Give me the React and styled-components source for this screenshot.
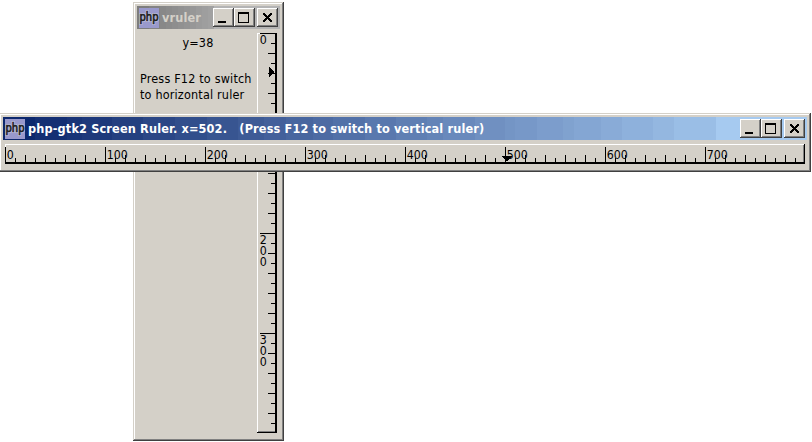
import React from "react";
import styled, { createGlobalStyle } from "styled-components";

const FONT = '"DejaVu Sans Condensed", "DejaVu Sans", sans-serif';

const GlobalStyle = createGlobalStyle`
  body { margin: 0; background: #fff; overflow: hidden; }
`;

const Desktop = styled.main`
  position: relative;
  width: 812px;
  height: 442px;
  overflow: hidden;
  background: #fff;
  font-family: ${FONT};
  font-stretch: condensed;
  color: #000;
`;

const Window = styled.section`
  position: absolute;
  left: ${(p) => p.$x}px;
  top: ${(p) => p.$y}px;
  width: ${(p) => p.$w}px;
  height: ${(p) => p.$h}px;
  box-sizing: border-box;
  padding: 4px;
  display: flex;
  flex-direction: column;
  background: #d4d0c8;
  box-shadow: inset -1px -1px #404040, inset 1px 1px #d4d0c8,
    inset -2px -2px #808080, inset 2px 2px #fff;
`;

const TitleBar = styled.header`
  flex: none;
  height: 23px;
  box-sizing: border-box;
  padding: 0 2px;
  display: flex;
  align-items: center;
  background: ${(p) => p.$fill};
`;

const Title = styled.h1`
  flex: 1;
  margin: 0 0 0 3px;
  font-size: 12.6px;
  line-height: 22px;
  font-weight: bold;
  letter-spacing: 0.145px;
  white-space: pre;
  color: ${(p) => p.$color};
`;

const CaptionButton = styled.button`
  width: 21px;
  height: 19px;
  padding: 0;
  border: 0;
  display: block;
  background: #d4d0c8;
  box-shadow: inset -1px -1px #404040, inset 1px 1px #fff, inset -2px -2px #808080;
  margin-left: ${(p) => (p.$gap ? 2 : 0)}px;
  svg { display: block; }
`;

const Logo = styled.svg`
  flex: none;
  width: 20px;
  height: 20px;
  display: block;
`;

const LogoText = styled.text`
  font-family: ${FONT};
  font-size: 12.6px;
`;

const VerticalBody = styled.div`
  flex: 1;
  display: flex;
  justify-content: space-between;
  padding: 4px 3px 0 3px;
`;

const Notes = styled.div`
  width: 116px;
  font-size: 12.5px;
  line-height: 16px;
  letter-spacing: 0.18px;
`;

const Reading = styled.p`
  margin: 2px 0 20px;
  text-align: center;
`;

const Hint = styled.p`
  margin: 0;
  white-space: nowrap;
`;

const HorizontalBody = styled.div`
  padding: 4px 2px 0;
`;

const Scale = styled.svg`
  display: block;
  flex: none;
`;

const Digit = styled.text`
  font-family: ${FONT};
  font-stretch: condensed;
  font-size: 12.3px;
`;

const bands = (stops) =>
  `linear-gradient(to right, ${stops
    .map(([from, to, color]) => `${color} ${from}px ${to}px`)
    .join(", ")})`;

const mix = (a, b, t) =>
  `rgb(${a.map((v, i) => Math.round(v + (b[i] - v) * t)).join(",")})`;

const stepFill = (edges, from, to) => {
  const width = edges[edges.length - 1];
  return bands(
    edges.slice(0, -1).map((e, i) => {
      const t = Math.min(1, ((e + edges[i + 1]) / 2) / (width * 0.93));
      return [e, edges[i + 1], mix(from, to, t)];
    })
  );
};

const ACTIVE = stepFill(
  [0, 32, 64, 79, 109, 140, 172, 204, 235, 261, 283, 310, 330, 362, 393, 424, 440, 472, 502, 512, 534, 560, 571, 598, 619, 650, 671, 713, 804],
  [10, 36, 106],
  [166, 202, 240]
);
const INACTIVE = stepFill([0, 12, 23, 29, 35, 41, 47, 53, 59, 65, 71, 77, 143], [122, 122, 122], [192, 192, 192]);

function PhpLogo() {
  return (
    <Logo viewBox="0 0 20 20">
      <rect width="20" height="20" fill="#9999cc" />
      <LogoText x="0.5" y="13.3" textLength="19" lengthAdjust="spacingAndGlyphs" stroke="#c4c4e0" strokeWidth="2" fill="#c4c4e0">php</LogoText>
      <LogoText x="0.5" y="13.3" textLength="19" lengthAdjust="spacingAndGlyphs" stroke="#222" strokeWidth=".7" fill="#222">php</LogoText>
    </Logo>
  );
}

function Caption({ kind }) {
  return (
    <CaptionButton $gap={kind === "close"} aria-label={kind}>
      <svg width="21" height="19" shapeRendering="crispEdges">
        {kind === "minimize" && <rect x="5" y="13" width="8" height="2" />}
        {kind === "maximize" && <path d="M4 4h11v11H4zM5 6v8h9V6z" fillRule="evenodd" />}
        {kind === "close" && (
          <path d="M6 5h2v1h1v1h1v1h1v-1h1v-1h1v-1h2v2h-1v1h-1v1h-1v1h1v1h1v1h1v2h-2v-1h-1v-1h-1v-1h-1v1h-1v1h-1v1h-2v-2h1v-1h1v-1h1v-1h-1v-1h-1v-1h-1z" />
        )}
      </svg>
    </CaptionButton>
  );
}

function Bar({ fill, color, children }) {
  return (
    <TitleBar $fill={fill}>
      <PhpLogo />
      <Title $color={color}>{children}</Title>
      <Caption kind="minimize" />
      <Caption kind="maximize" />
      <Caption kind="close" />
    </TitleBar>
  );
}

const range = (n) => Array.from({ length: n }, (_, i) => i);

function HorizontalRuler() {
  return (
    <Scale width="800" height="20" shapeRendering="crispEdges">
      <rect width="799" height="1" fill="#fff" />
      <rect width="1" height="19" fill="#fff" />
      <rect x="798" y="1" width="1" height="18" fill="#808080" />
      <rect x="799" width="1" height="20" />
      <rect y="18" width="800" height="2" />
      {range(80).map((i) => {
        const top = i % 10 === 0 ? 3 : i % 2 === 0 ? 11 : 14;
        return <rect key={i} x={i * 10} y={top} width="1" height={19 - top} />;
      })}
      {range(8).map((i) =>
        String(i * 100).split("").map((d, j) => (
          <Digit key={`${i}-${j}`} x={i * 100 + 1.7 + j * 7} y="15">{d}</Digit>
        ))
      )}
      <path d="M497 12h10v1h-1v1h-1v1h-1v1h-1v1h-2v-1h-1v-1h-1v-1h-1v-1h-1z" />
    </Scale>
  );
}

function VerticalRuler() {
  return (
    <Scale width="20" height="400" shapeRendering="crispEdges">
      <rect width="20" height="1" fill="#fff" />
      <rect width="1" height="400" fill="#fff" />
      <rect x="1" y="398" width="17" height="1" fill="#808080" />
      <rect y="399" width="20" height="1" />
      <rect x="18" width="2" height="400" />
      {range(40).map((i) => {
        const left = i % 10 === 0 ? 3 : i % 2 === 0 ? 11 : 14;
        return <rect key={i} x={left} y={i * 10} width={19 - left} height="1" />;
      })}
      {range(4).map((i) =>
        String(i * 100).split("").map((d, j) => (
          <Digit key={`${i}-${j}`} x="2.7" y={i * 100 + 11 + j * 11}>{d}</Digit>
        ))
      )}
      <path d="M12 34h1v1h1v1h1v1h1v1h1v2h-1v1h-1v1h-1v1h-1v1h-1z" />
    </Scale>
  );
}

export default function App() {
  return (
    <>
      <GlobalStyle />
      <Desktop>
        <Window $x={133} $y={2} $w={151} $h={439}>
          <Bar fill={INACTIVE} color="#d4d0c8">vruler</Bar>
          <VerticalBody>
            <Notes>
              <Reading>y=38</Reading>
              <Hint>Press F12 to switch<br />to horizontal ruler</Hint>
            </Notes>
            <VerticalRuler />
          </VerticalBody>
        </Window>
        <Window $x={-1} $y={113} $w={812} $h={59}>
          <Bar fill={ACTIVE} color="#fff">{"php-gtk2 Screen Ruler. x=502.   (Press F12 to switch to vertical ruler)"}</Bar>
          <HorizontalBody>
            <HorizontalRuler />
          </HorizontalBody>
        </Window>
      </Desktop>
    </>
  );
}
